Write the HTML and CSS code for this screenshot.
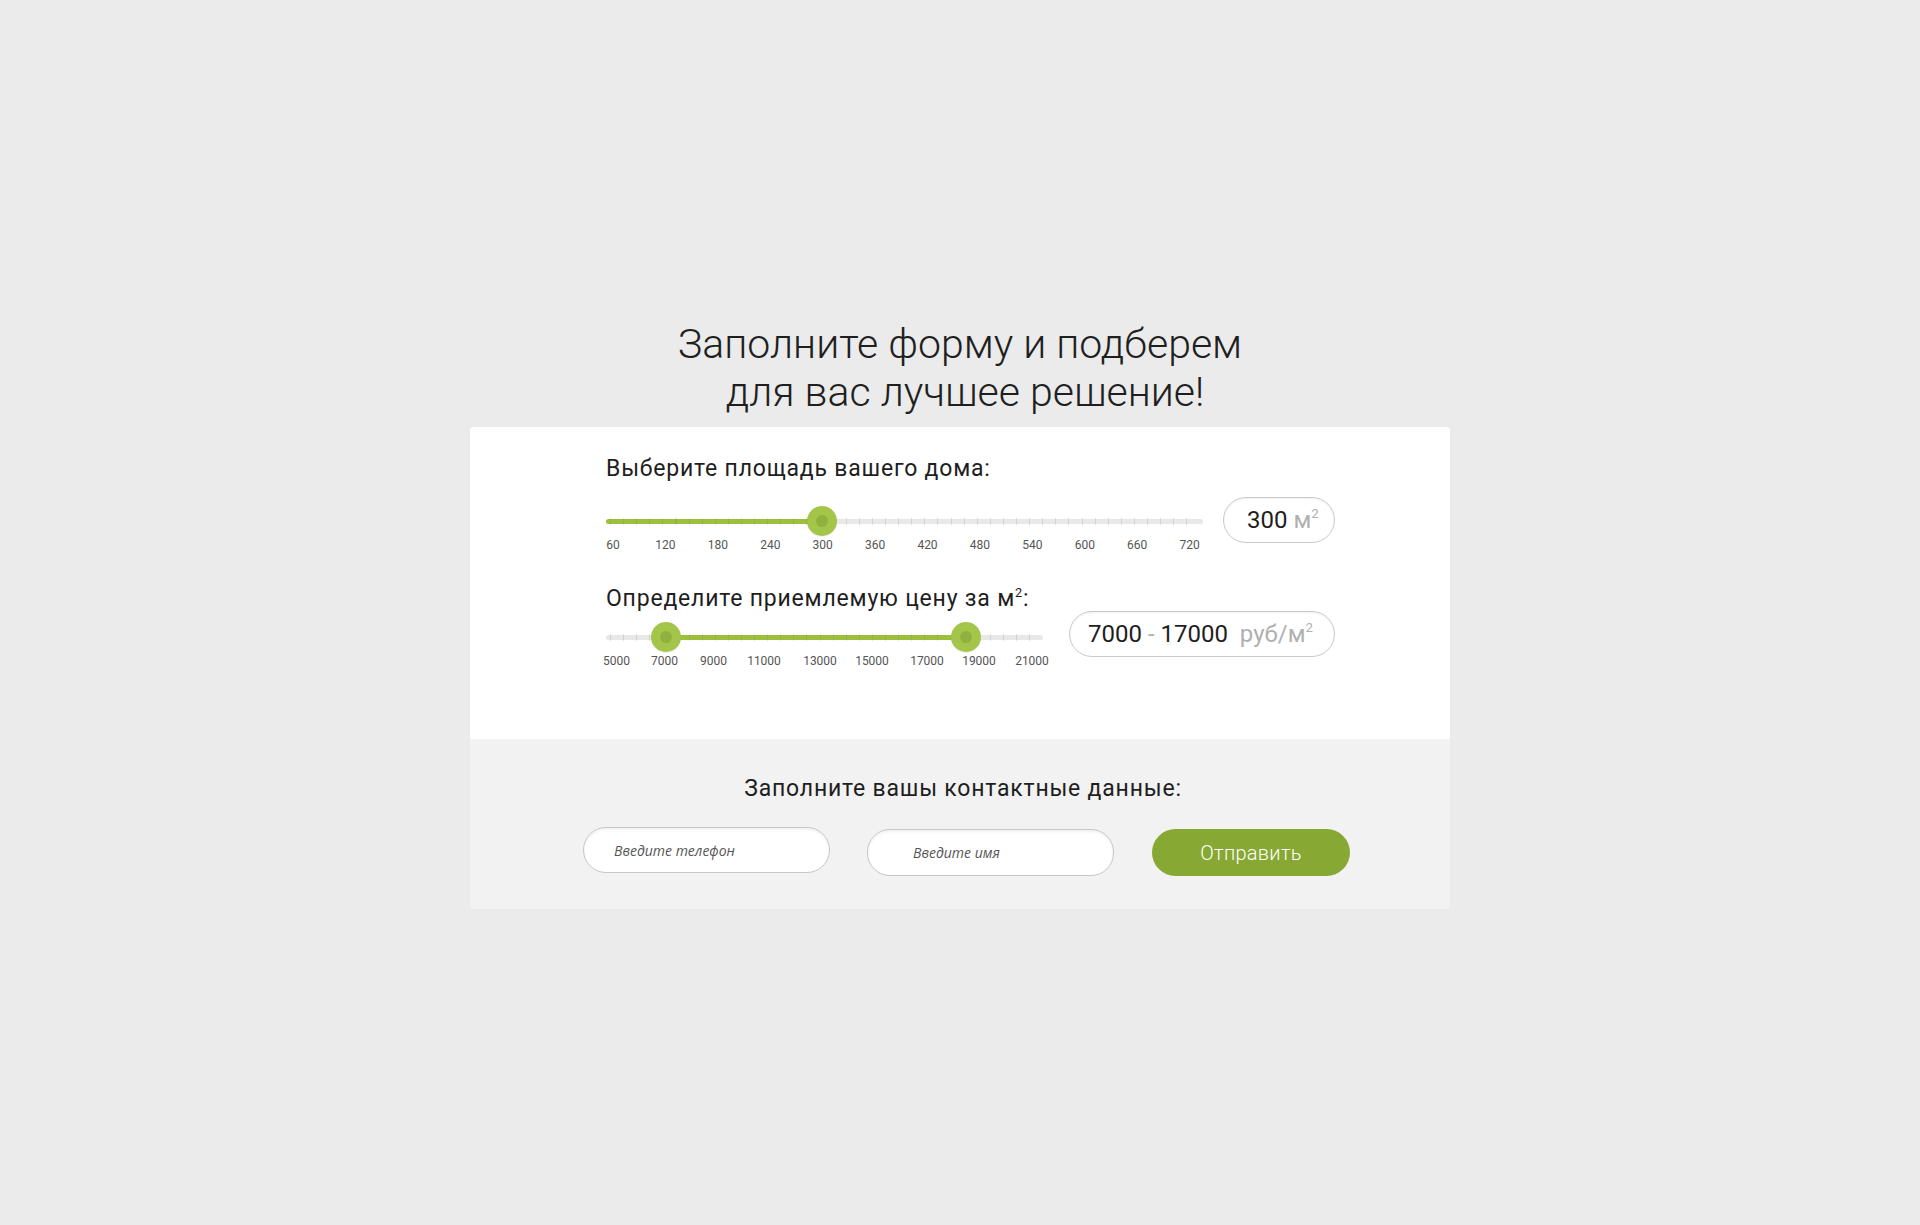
FILE: index.html
```html
<!DOCTYPE html>
<html lang="ru">
<head>
<meta charset="utf-8">
<title>Подбор дома</title>
<link rel="stylesheet" href="styles.css">
</head>
<body>
<main class="page">
  <h1 class="title">Заполните форму и подберем<br><span class="title-l2">для вас лучшее решение!</span></h1>
  <section class="card">
    <div class="card-top">
      <div class="field field-area">
        <div class="field-label">Выберите площадь вашего дома:</div>
        <div class="slider-row">
          <div class="slider slider-area">
            <div class="track-wrap">
              <div class="track"></div>
              <div class="fill" style="left:0px;width:216px"></div>
              <div class="ticks"></div>
              <div class="thumb" style="left:216px"></div>
            </div>
            <div class="scale">
              <span style="left:7px">60</span>
              <span style="left:59.4px">120</span>
              <span style="left:111.8px">180</span>
              <span style="left:164.3px">240</span>
              <span style="left:216.7px">300</span>
              <span style="left:269.1px">360</span>
              <span style="left:321.5px">420</span>
              <span style="left:373.9px">480</span>
              <span style="left:426.4px">540</span>
              <span style="left:478.8px">600</span>
              <span style="left:531.2px">660</span>
              <span style="left:583.6px">720</span>
            </div>
          </div>
          <div class="value value-area"><span class="num">300</span> <span class="unit">м<sup>2</sup></span></div>
        </div>
      </div>
      <div class="field field-price">
        <div class="field-label">Определите приемлемую цену за м<sup>2</sup>:</div>
        <div class="slider-row">
          <div class="slider slider-price">
            <div class="track-wrap">
              <div class="track"></div>
              <div class="fill" style="left:60px;width:300px"></div>
              <div class="ticks"></div>
              <div class="thumb" style="left:60px"></div>
              <div class="thumb" style="left:360px"></div>
            </div>
            <div class="scale">
              <span style="left:10.5px">5000</span>
              <span style="left:58.5px">7000</span>
              <span style="left:107.5px">9000</span>
              <span style="left:158px">11000</span>
              <span style="left:214px">13000</span>
              <span style="left:266px">15000</span>
              <span style="left:321px">17000</span>
              <span style="left:373px">19000</span>
              <span style="left:426px">21000</span>
            </div>
          </div>
          <div class="value value-price"><span class="num">7000</span> <span class="dash">-</span> <span class="num">17000</span>&nbsp; <span class="unit">руб/м<sup>2</sup></span></div>
        </div>
      </div>
    </div>
    <div class="card-bottom">
      <div class="contact-title">Заполните вашы контактные данные:</div>
      <div class="contact-row">
        <input class="input input-phone" type="text" placeholder="Введите телефон">
        <input class="input input-name" type="text" placeholder="Введите имя">
        <button class="submit" type="button">Отправить</button>
      </div>
    </div>
  </section>
</main>
</body>
</html>
```

FILE: styles.css
```css
html, body {
  margin: 0;
  padding: 0;
}
body {
  background: #ebebeb;
  font-family: Roboto, "Liberation Sans", Arial, sans-serif;
  color: #1e1e1e;
  min-height: 1225px;
}
.page {
  display: flex;
  flex-direction: column;
  align-items: center;
  padding-top: 320px;
}
.title {
  margin: 0 0 11px;
  font-weight: 300;
  font-size: 41px;
  line-height: 48px;
  text-align: center;
  color: #1f1f1f;
}
.title-l2 {
  display: inline-block;
  padding-left: 10px;
}
.card {
  width: 980px;
  border-radius: 4px;
  overflow: hidden;
  background: #fff;
  box-shadow: 0 0 1px rgba(0,0,0,0.06);
}
.card-top {
  padding: 29px 115px 70px 136px;
  background: #fff;
}
.field-label {
  font-size: 23px;
  line-height: 26px;
  letter-spacing: 0.8px;
  color: #1e1e1e;
  white-space: nowrap;
}
.field-label sup, .unit sup {
  font-size: 0.55em;
  line-height: 0;
  vertical-align: 0.75em;
}
.field-area .slider-row { margin-top: 24px; }
.field-price { margin-top: 33px; }
.field-price .slider-row { margin-top: 10px; }
.slider-row {
  display: flex;
  align-items: flex-start;
}
.slider { position: relative; flex: none; }
.slider-area { width: 597px; margin-right: 20px; }
.slider-price { width: 437px; margin-right: 26px; }
.track-wrap {
  position: relative;
  height: 30px;
}
.track {
  position: absolute;
  left: 0; right: 0;
  top: 13px;
  height: 5px;
  border-radius: 3px;
  background: #e8e8e8;
}
.fill {
  position: absolute;
  top: 13px;
  height: 5px;
  border-radius: 3px;
  background: #9cc03c;
}
.ticks {
  position: absolute;
  left: 4px; right: 4px;
  top: 12px;
  height: 7px;
  background: repeating-linear-gradient(90deg, rgba(120,120,120,0.2) 0 1px, transparent 1px 13.1px);
}
.thumb {
  position: absolute;
  top: 0;
  width: 30px;
  height: 30px;
  margin-left: -15px;
  border-radius: 50%;
  background: #a3c549;
  box-shadow: 0 1px 1px rgba(0,0,0,0.08);
}
.thumb::after {
  content: "";
  position: absolute;
  left: 9px; top: 9px;
  width: 12px; height: 12px;
  border-radius: 50%;
  background: #91b13f;
}
.scale {
  position: relative;
  height: 16px;
  margin-top: 1px;
}
.scale span {
  position: absolute;
  top: 0;
  transform: translateX(-50%);
  font-size: 12px;
  line-height: 16px;
  color: #555;
  white-space: nowrap;
}
.value {
  flex: none;
  box-sizing: border-box;
  height: 46px;
  border: 1px solid #c9c9c9;
  border-radius: 23px;
  box-shadow: inset 0 1px 2px rgba(0,0,0,0.06);
  background: #fff;
  font-size: 24px;
  line-height: 44px;
  white-space: nowrap;
}
.value-area { width: 112px; padding-left: 23px; margin-top: -9px; }
.value-price { width: 266px; padding-left: 18px; margin-top: -11px; }
.num { color: #1e1e1e; }
.unit, .dash { color: #b0b0b0; }
.card-bottom {
  background: #f2f2f2;
  padding: 37px 0 33px 113px;
}
.contact-title {
  font-size: 23px;
  line-height: 26px;
  letter-spacing: 0.8px;
  color: #1e1e1e;
  text-align: center;
  margin-left: -107px;
}
.contact-row {
  display: flex;
  align-items: flex-start;
  margin-top: 25px;
}
.input {
  box-sizing: border-box;
  width: 247px;
  height: 46px;
  border: 1px solid #c6c6c6;
  border-radius: 23px;
  background: #fff;
  box-shadow: inset 0 2px 3px rgba(0,0,0,0.05);
  font-family: "Open Sans", "DejaVu Sans", sans-serif;
  font-style: italic;
  font-size: 14px;
  color: #555;
  outline: none;
}
.input::placeholder { color: #555; opacity: 1; }
.input-phone { padding: 0 0 0 30px; }
.input-name { padding: 0 0 0 45px; margin-left: 37px; margin-top: 2px; height: 47px; }
.submit {
  box-sizing: border-box;
  width: 198px;
  height: 47px;
  margin-left: 38px;
  margin-top: 2px;
  border: 0;
  border-radius: 24px;
  background: #87a832;
  color: #fff;
  font-family: Roboto, "Liberation Sans", sans-serif;
  font-weight: 300;
  font-size: 20px;
  letter-spacing: 0.3px;
  cursor: pointer;
}
```
